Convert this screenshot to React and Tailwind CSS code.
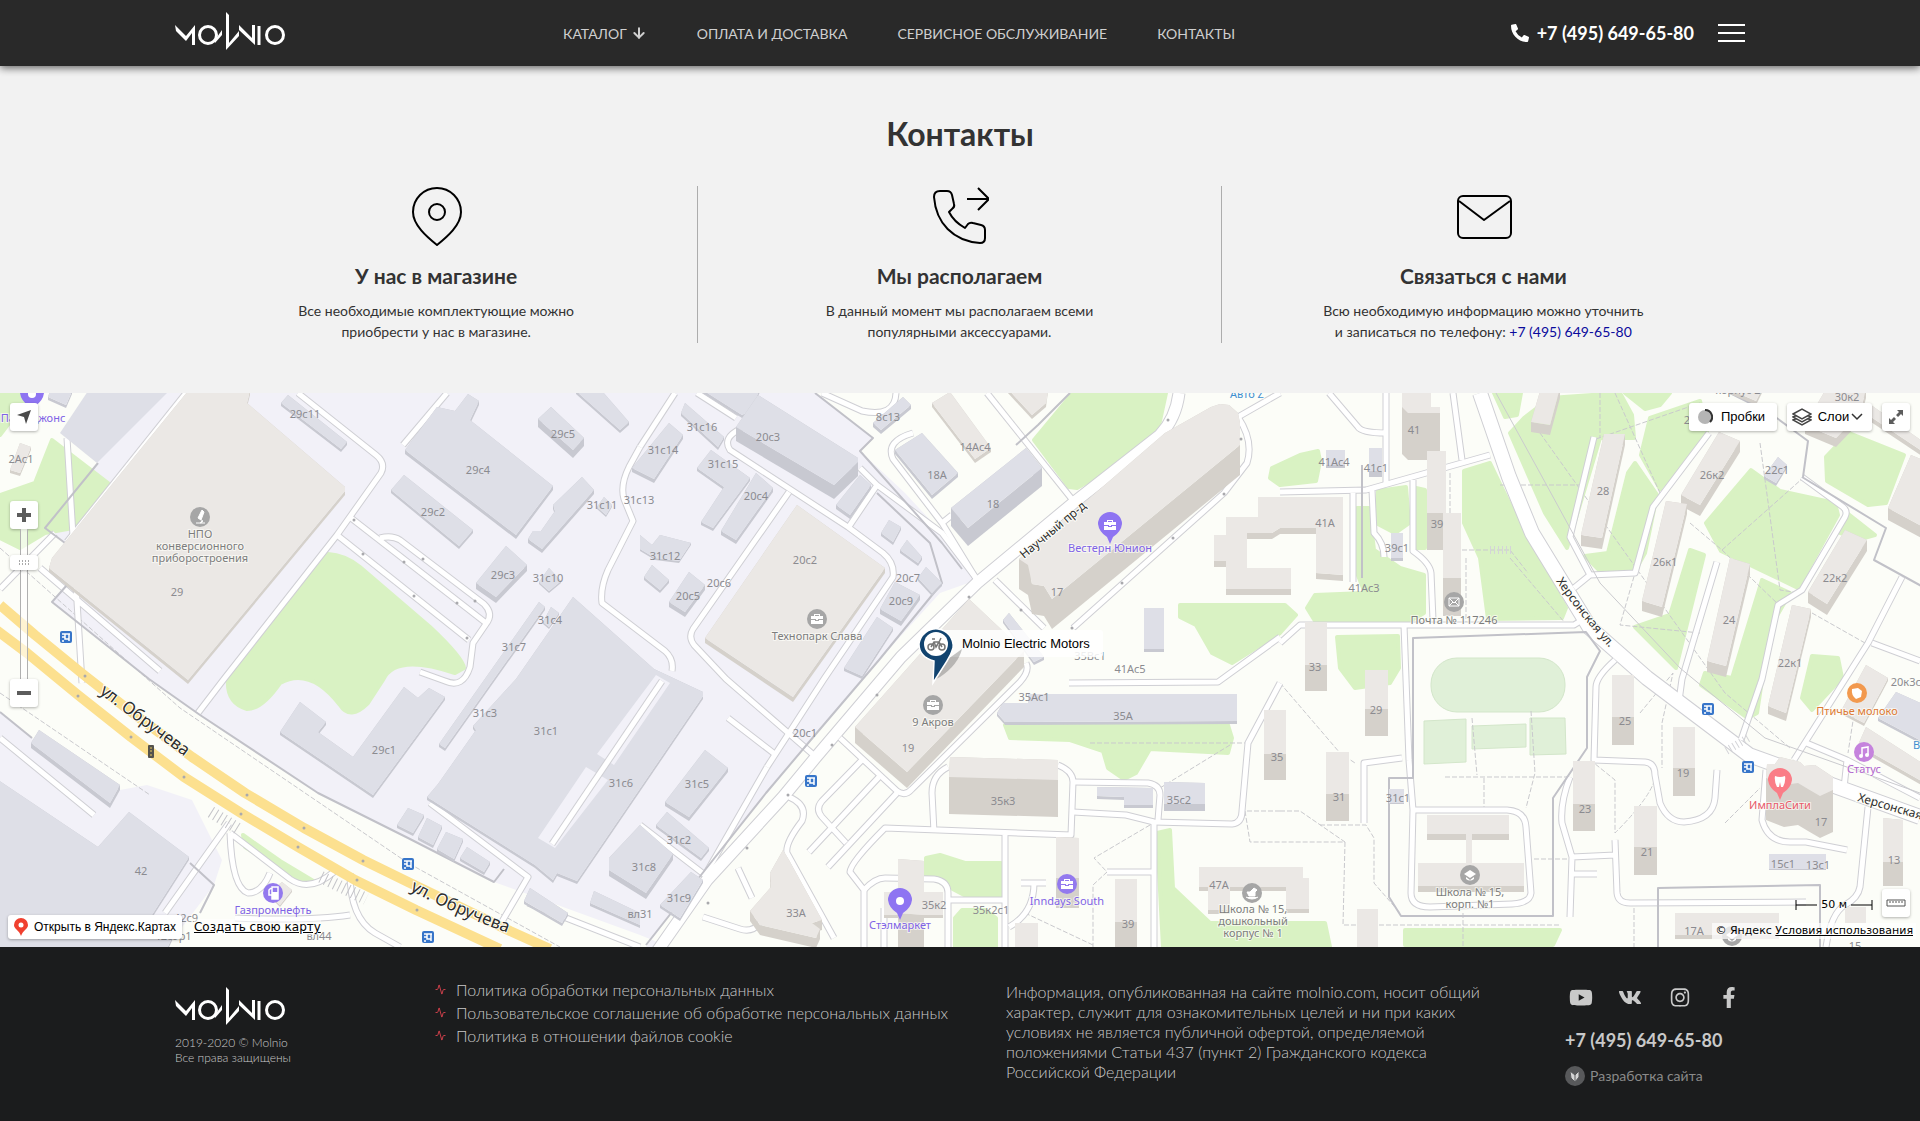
import React from 'react';
import { ArrowDown, Activity } from 'lucide-react';
import { FaPhoneAlt, FaYoutube, FaVk, FaInstagram, FaFacebookF } from 'react-icons/fa';

const PHONE = '+7 (495) 649-65-80';

const NAV = ['Оплата и доставка', 'Сервисное обслуживание', 'Контакты'];

const POLICIES = [
  'Политика обработки персональных данных',
  'Пользовательское соглашение об обработке персональных данных',
  'Политика в отношении файлов cookie',
];

const SOCIALS = [
  { name: 'YouTube', Icon: FaYoutube },
  { name: 'VK', Icon: FaVk },
  { name: 'Instagram', Icon: FaInstagram },
  { name: 'Facebook', Icon: FaFacebookF },
];

/* ---------- Map data ---------- */

const INDUSTRIAL = [
  'M90 0H815L873 45L860 58L905 100L944 142L974 188L940 200L879 267L815 342L766 400L705 477L646 554H670L640 542L494 489L408 445L318 400L200 322L149 286L52 209L67 192L49 174L65 150L45 135L98 70Z',
  'M0 319L32 345L120 397L147 392L192 407L222 467L214 492L167 554H0Z',
];

const GREENS = [
  '0,0 32,0 0,42',
  '52,47 108,90 73,135 45,140 20,155 0,145 0,102 35,90',
  '243,442 280,468 315,489 303,490 245,454',
  '1073,0 1166,0 1158,37 1120,70 1077,95 1069,94 1034,47',
  '1180,212 1285,212 1296,222 1280,240 1232,270 1212,260 1196,232 1180,224',
  '1272,75 1300,62 1318,58 1320,68 1316,88 1280,92 1270,85',
  '1378,98 1406,94 1409,130 1395,140 1376,130',
  '1416,95 1425,97 1425,155 1417,155',
  '1357,115 1369,115 1374,157 1400,175 1424,182 1424,220 1410,228 1315,228 1307,215 1315,202 1365,200 1357,180',
  '1464,78 1490,70 1526,145 1566,215 1562,225 1488,226 1480,165 1464,130',
  '1494,0 1521,0 1517,22 1505,24',
  '1510,40 1524,25 1550,5 1620,0 1632,22 1634,45 1600,45 1567,155 1545,120',
  '1635,70 1657,102 1645,160 1635,178 1600,178 1585,163 1608,160 1628,80',
  '1641,62 1650,25 1700,8 1707,38 1660,96',
  '1625,0 1670,0 1660,12 1645,16',
  '1751,77 1780,98 1835,110 1838,122 1798,195 1721,158 1706,130',
  '1849,40 1904,62 1886,110 1868,112 1827,88 1826,64',
  '1847,120 1875,142 1864,145 1840,140',
  '1762,187 1790,200 1770,235 1757,320 1748,325 1701,292 1705,280 1732,285',
  '1690,157 1704,162 1676,275 1635,234 1670,222',
  '1812,263 1838,265 1842,285 1812,317 1802,305',
  '1337,244 1398,243 1399,275 1390,290 1355,295 1340,275',
  '1005,332 1228,332 1232,345 1228,360 1150,356 1136,380 1124,386 1108,375 1103,358 1070,347 1010,345',
  '926,465 940,462 965,470 1001,470 1001,504 968,504 926,482',
  '955,525 962,517 985,517 996,525 996,554 955,554',
  '1157,440 1170,437 1173,495 1210,530 1325,530 1330,554 1163,554',
  '1405,537 1560,537 1553,552 1405,552',
];

const ROADS = [
  'M186 0L67 149',
  'M102 0L71 44M141 0L90 59',
  'M298 0L376 62Q386 70 381 80L337 142L224 286L198 320',
  'M447 0L403 52',
  'M351 125L486 230',
  'M337 142L469 247',
  'M380 145Q392 142 400 147L484 211Q494 221 486 231L473 250L470 274Q463 296 445 288L420 279',
  'M640 54L629 74Q620 92 624 106L633 128L608 177Q600 195 602 210L665 258Q674 266 672 278',
  'M675 0L640 54M697 0L736 25',
  'M740 36Q722 45 730 57L848 134L883 160Q895 170 893 184L824 286L767 374',
  'M789 99L693 236Q688 244 694 252L726 286L816 364',
  'M860 75L877 92L848 135M877 92L942 140L979 189',
  'M987 0L1075 110',
  'M913 40Q885 48 893 66L942 130L977 187M942 130L952 122',
  'M822 0L862 18Q895 25 896 0',
  'M1280 0L1238 24Q1254 48 1247 70L1224 100L1073 235M1044 235L995 187',
  'M1026 270Q1030 278 1020 289L912 396Q905 404 897 398L840 345',
  'M897 400L828 474M862 367L822 408Q815 416 822 424L846 450M879 384L809 459M728 325L776 362',
  'M789 404Q808 412 802 428Q785 450 787 460L834 545M738 475L752 505M703 524L740 536Q752 540 760 530',
  'M934 439L932 400Q932 382 948 374M1058 372Q1073 378 1073 389L1071 442L885 435Q850 470 850 479L864 497V554',
  'M864 497Q875 485 885 485L934 486Q948 488 948 500V554M884 515V554',
  'M1073 389L1148 390Q1160 392 1160 402L1158 427M1073 419L1126 422L1154 429L1232 431Q1242 430 1242 418L1248 350L1280 290',
  'M1154 429V554M1107 479H1154M1005 442V554M948 507H1005M1021 490H1046M1034 490Q1034 520 1009 534',
  'M1069 290L1218 289L1280 244',
  'M640 432L705 482L767 374',
  'M1329 0L1358 34Q1362 40 1386 40M1386 0V90',
  'M1280 99L1366 97L1490 62M1372 97L1374 140Q1384 150 1384 164',
  'M1413 87V158Q1430 170 1431 180L1433 227M1353 100V189',
  'M1280 250L1300 232H1402L1574 232L1590 222M1404 232L1409 367',
  'M1453 0L1462 67M1594 44L1570 144L1590 182L1635 180L1653 114L1709 40M1590 182L1574 195',
  'M1802 84L1843 114Q1848 118 1845 124L1802 197L1778 212L1762 286L1741 347',
  'M1717 169L1682 286L1679 308M1902 184L1868 250L1794 367M1872 250L1920 268',
  'M1615 267Q1596 284 1596 294L1594 367L1645 369Q1655 370 1655 382L1660 410Q1668 429 1684 429Q1713 427 1715 405L1717 377',
  'M1570 384Q1560 410 1562 430L1572 464L1570 524M1572 464L1615 462M1572 481H1597M1615 447L1617 500Q1618 510 1630 510L1806 509',
  'M1868 414L1860 494Q1858 505 1845 512Q1831 520 1826 554M1766 377L1762 427Q1768 449 1790 449L1806 449L1847 457',
  'M1364 430V370L1402 365M1409 367L1413 417L1507 417Q1525 418 1526 434L1531 500Q1530 510 1512 511L1430 514Q1411 514 1411 500L1413 417',
  'M1804 349L1847 367L1844 395M1847 367L1920 405',
  'M0 394L98 466M0 345L94 422M229 430L165 520M430 410L528 484L500 532M528 510L640 554',
  'M230 440Q232 495 248 500Q262 500 270 480M230 440L290 486Q310 500 335 478M350 480Q350 525 375 540L400 554M350 522Q310 528 235 525',
  'M67 45L82 290M0 196L55 140M40 175L160 278M600 370L548 450L636 315',
];

const NAUCHNY = 'M1179 0Q1176 25 1160 42L1077 107L977 190L901 264L816 364L783 404L707 487L656 560';
const KHERSONSKAYA = 'M1480 0L1509 84L1532 140L1590 235L1647 285L1749 362L1920 424';

const FOOTPATHS = [
  'M0 155L180 315L408 470L560 554M0 300L150 402M1600 0V45M1500 92H1584M1596 46L1700 10M1615 0L1660 100',
  'M1690 130L1722 157L1782 215M1722 157L1803 85M1760 50L1780 197L1800 200M1812 220L1865 250L1850 277',
  'M1462 157H1510L1528 180M1510 165L1565 230M1450 80V210M1466 165V230M1280 290L1340 360L1355 370',
  'M1280 418H1300L1345 449H1280M1320 432H1366L1374 445V490L1400 520M1345 449L1343 532H1560M1463 520V554',
  'M1472 325L1477 382M1531 318L1535 380L1526 415M1445 384H1570M1484 385V417M1534 466H1570M1634 555V510M1656 380Q1655 400 1615 440V387L1594 370',
  'M1090 350H1248M1230 352L1160 395M1150 432L1094 465L1107 479L1093 492V554M1025 520L1093 552M1280 418H1245L1250 449H1280',
  'M1640 320L1673 280L1662 330V375M1725 430L1760 395M1700 240L1620 232L1635 180M1540 40L1725 300L1790 355M1855 315L1848 360',
];

const FENCES = [
  'M98 70L45 135L65 150M67 192L52 209L149 286L200 322L318 400L408 445L494 489L504 476',
  'M815 0L873 45L860 58L942 150L962 176M646 552L705 477L766 400L815 342L879 267L942 190L930 150L877 100',
  'M1413 245V385H1389V504L1401 523H1553V405L1587 355V284L1600 258L1586 239Z',
  'M1658 554V495L1820 492V554M1362 72V185M1802 84L1886 135L1874 167L1925 195',
  'M1803 84L1808 48L1770 20L1730 0M1070 0L1045 25L1038 32L1016 52M190 470L214 492L200 520M0 319L32 345',
];

// [kind, roof outline, wall height]; i - industrial, r - residential
const BUILDINGS = [
  ['i', '90,-5 172,-5 97,70 60,40', 0],
  ['r', '20,50 31,54 20,80 10,77', 3],
  ['i', '50,-2 72,-2 66,12 48,4', 3],
  ['r', '188,-2 250,-2 247,10 345,94 345,98 188,287 49,175 52,165', 4],
  ['i', '288,2 347,49 341,56 281,10', 3],
  ['i', '437,14 455,18 468,1 479,8 470,27 553,93 516,142 405,57', 4],
  ['i', '551,14 584,45 573,57 538,26', 8],
  ['i', '576,-2 602,-2 629,29 620,37', 3],
  ['i', '404,82 473,137 459,153 391,97', 3],
  ['i', '582,84 594,97 542,156 528,146 533,138 541,138 555,118 553,112', 4],
  ['i', '506,153 527,172 496,204 476,190', 6],
  ['i', '549,175 561,188 549,198 539,189', 2],
  ['i', '604,104 612,112 606,122 597,114', 2],
  ['i', '539,209 545,214 445,355 439,351', 3],
  ['i', '551,214 559,220 549,234 543,229', 2],
  ['i', '573,204 654,276 703,299 703,303 577,488 557,480 553,487 535,472 427,404 438,391 476,337 473,333 516,286', 3],
  ['i', '300,309 326,329 318,339 353,364 404,294 418,305 429,295 445,304 373,402 280,339', 3],
  ['i', '408,415 424,422 413,440 397,432', 3],
  ['i', '427,425 442,433 433,452 418,444', 3],
  ['i', '446,439 463,446 454,466 437,456', 3],
  ['i', '467,454 490,469 484,479 460,465', 3],
  ['i', '530,495 568,520 562,530 524,508', 3],
  ['i', '594,498 640,520 640,532 590,510', 3],
  ['i', '39,337 120,392 110,410 31,350', 5],
  ['i', '-5,385 98,454 129,419 189,464 150,525 176,536 165,560 -5,560', 3],
  ['i', '640,432 673,461 646,500 609,477 609,465', 6],
  ['i', '667,419 709,455 701,465 656,432', 3],
  ['i', '705,357 728,375 689,424 665,409', 4],
  ['i', '691,479 703,487 680,525 660,512', 3],
  ['r', '783,457 789,467 822,527 812,530 820,536 816,545 760,532 750,518 771,494 770,480', 10],
  ['r', '282,489 292,497 280,512 268,500', 2],
  ['i', '685,10 724,44 718,54 681,20', 3],
  ['i', '669,30 683,42 654,86 632,75', 4],
  ['i', '711,57 750,85 713,135 701,129 724,94 697,75', 3],
  ['i', '701,-4 760,-4 750,18 742,22', 3],
  ['i', '758,2 858,65 858,69 834,92 736,34', 14],
  ['i', '860,82 871,92 850,122 836,112', 4],
  ['i', '756,80 773,95 736,147 721,138', 4],
  ['i', '640,142 652,152 660,142 691,150 679,168 655,165 640,156', 2],
  ['i', '652,172 669,187 660,197 644,184', 3],
  ['i', '689,179 705,192 685,219 669,209', 5],
  ['r', '797,112 885,175 793,304 705,245', 5],
  ['i', '889,127 901,134 893,149 881,140', 3],
  ['i', '907,147 922,164 918,170 900,157', 3],
  ['i', '926,174 942,190 932,200 918,185', 3],
  ['i', '895,189 920,202 901,228 880,216', 5],
  ['i', '877,224 893,235 862,283 844,275', 3],
  ['i', '903,4 911,12 881,37 873,30', 4],
  ['r', '950,-1 991,55 975,66 932,10', 4],
  ['r', '1007,-5 1048,-5 1046,10 1032,22', 4],
  ['i', '922,40 958,80 932,102 895,57', 4],
  ['i', '1026,55 1042,75 968,135 951,115', 18],
  ['i', '1009,220 1044,264 1034,269 1003,227', 3],
  ['r', '1211,14 1220,11 1229,12 1238,20 1240,30 1240,52 1052,206 1044,193 1032,191 1028,172 1019,166 1165,40', 30],
  ['r', '969,206 1024,258 907,379 855,334', 16],
  ['r', '1258,104 1343,104 1343,182 1316,180 1316,135 1280,135 1272,140 1247,140 1247,175 1291,175 1291,196 1226,196 1226,168 1214,168 1214,142 1226,142 1226,124 1258,124', 6],
  ['i', '1144,215 1164,215 1164,256 1144,256', 3],
  ['i', '1003,310 1028,310 1028,301 1237,301 1237,328 1005,329 997,320', 3],
  ['r', '950,364 1058,367 1058,387 949,384', 37],
  ['i', '1164,389 1205,390 1205,411 1164,411', 7],
  ['i', '1097,394 1153,395 1153,412 1124,412 1124,404 1097,403', 3],
  ['r', '884,499 943,499 943,522 884,522', 3],
  ['r', '898,466 924,468 924,522 898,520', 36],
  ['r', '1056,444 1079,445 1079,485 1056,485', 30],
  ['r', '1115,486 1137,486 1137,529 1115,529', 28],
  ['r', '1015,530 1038,530 1038,560 1015,560', 0],
  ['r', '1199,474 1303,474 1303,485 1309,485 1309,516 1286,516 1286,494 1230,494 1230,517 1208,517 1208,494 1199,494', 4],
  ['r', '1264,317 1286,317 1286,361 1264,361', 26],
  ['r', '1305,229 1327,229 1327,272 1305,272', 26],
  ['r', '1365,277 1388,277 1388,316 1365,316', 27],
  ['r', '1326,359 1349,359 1349,401 1326,401', 27],
  ['r', '1402,-5 1431,-5 1431,14 1440,14 1440,20 1408,20 1402,14', 47],
  ['r', '1427,58 1446,58 1446,120 1427,120', 37],
  ['r', '1443,120 1461,120 1461,185 1443,185', 38],
  ['i', '1326,57 1345,57 1345,72 1326,72', 3],
  ['i', '1369,55 1382,55 1382,78 1369,78', 6],
  ['i', '1391,140 1403,140 1403,165 1391,165', 3],
  ['r', '1604,41 1625,41 1602,145 1581,142', 11],
  ['r', '1541,-5 1560,-5 1550,32 1531,29', 10],
  ['r', '1719,39 1740,48 1700,112 1681,102', 11],
  ['r', '1666,108 1687,111 1662,214 1642,208', 10],
  ['r', '1730,165 1750,171 1726,273 1707,268', 11],
  ['r', '1845,137 1867,147 1827,211 1808,199', 11],
  ['r', '1792,212 1811,216 1786,320 1768,313', 8],
  ['i', '1778,64 1787,72 1776,90 1764,83', 3],
  ['r', '1826,-4 1866,-4 1860,20 1836,45 1805,32', 9],
  ['r', '1911,62 1925,68 1925,135 1888,115', 12],
  ['r', '1871,12 1925,50 1925,60 1868,22', 5],
  ['r', '1728,-4 1762,-4 1756,8', 4],
  ['r', '1866,272 1888,285 1864,330 1841,318', 3],
  ['i', '1896,299 1925,312 1925,350 1878,325', 3],
  ['r', '1866,334 1925,372 1925,390 1858,352', 4],
  ['r', '1612,282 1634,282 1634,324 1612,324', 28],
  ['r', '1573,368 1595,368 1595,411 1573,411', 27],
  ['r', '1673,334 1695,334 1695,375 1673,375', 28],
  ['r', '1634,413 1657,413 1657,454 1634,454', 28],
  ['r', '1767,371 1775,371 1780,364 1800,369 1804,373 1815,372 1833,384 1833,397 1820,403 1808,396 1798,390 1784,392 1766,385', 42],
  ['i', '1769,461 1826,461 1826,476 1769,476', 1],
  ['r', '1883,425 1903,427 1903,469 1883,469', 24],
  ['r', '1427,422 1509,422 1509,441 1472,441 1472,470 1524,470 1524,493 1418,493 1418,470 1466,470 1466,441 1427,441', 6],
  ['r', '1675,520 1779,520 1779,542 1675,542', 4],
  ['r', '1357,516 1378,516 1378,560 1357,560', 0],
  ['r', '1845,514 1866,514 1866,530 1845,530', 0],
  ['i', '1389,396 1404,396 1404,410 1389,410', 1],
];

const FILLS = {
  i: { roof: '#dedfe7', wall: '#c8c9d1' },
  r: { roof: '#ebe8e5', wall: '#d5d1cb' },
};

// [text, x, y] - house numbers
const NUMBERS = [
  ['29с11', 305, 25], ['29с5', 563, 45], ['29с4', 478, 81], ['29с2', 433, 123], ['31с11', 602, 116],
  ['31с13', 639, 111], ['29с3', 503, 186], ['31с10', 548, 189], ['31с4', 550, 231], ['31с7', 514, 258],
  ['29', 177, 203], ['2Ас1', 21, 70], ['31с16', 702, 38], ['31с14', 663, 61], ['31с15', 723, 75],
  ['20с3', 768, 48], ['20с4', 756, 107], ['8с13', 888, 28], ['14Ас4', 975, 58], ['18А', 937, 86],
  ['18', 993, 115], ['31с12', 665, 167], ['20с6', 719, 194], ['20с5', 688, 207], ['20с2', 805, 171],
  ['20с7', 908, 189], ['20с9', 901, 212], ['17', 1057, 203], ['41Ас5', 1130, 280], ['35Вс1', 1090, 267],
  ['41', 1414, 41], ['41Ас4', 1334, 73], ['41с1', 1376, 79], ['41А', 1325, 134], ['39', 1437, 135],
  ['39с1', 1397, 159], ['41Ас3', 1364, 199], ['33', 1315, 278], ['28', 1603, 102], ['26к2', 1712, 86],
  ['26к1', 1665, 173], ['22с1', 1777, 81], ['22к2', 1835, 189], ['24', 1729, 231], ['22к1', 1790, 274],
  ['30к2', 1847, 8], ['26к3', 1696, 31], ['корпус 2', 1738, 1], ['31с3', 485, 324], ['31с1', 546, 342], ['29с1', 384, 361],
  ['31с6', 621, 394], ['42', 141, 482], ['42с9', 186, 529], ['42с9р1', 173, 547], ['вл44', 319, 547],
  ['20с1', 805, 344], ['31с5', 697, 395], ['31с2', 679, 451], ['31с8', 644, 478], ['31с9', 679, 509],
  ['вл31', 640, 525], ['33А', 796, 524], ['35Ас1', 1034, 308], ['35А', 1123, 327], ['19', 908, 359],
  ['35к3', 1003, 412], ['35с2', 1179, 411], ['35', 1277, 368], ['35к2', 934, 516], ['35к2с1', 991, 521],
  ['39', 1128, 535], ['47А', 1219, 496], ['29', 1376, 321], ['31', 1339, 408], ['31с1', 1398, 409],
  ['25', 1625, 332], ['23', 1585, 420], ['19', 1683, 384], ['21', 1647, 463], ['17', 1821, 433],
  ['15с1', 1783, 475], ['13с1', 1818, 476], ['13', 1894, 471], ['17А', 1694, 542], ['20к3с3', 1909, 293], ['15', 1855, 557],
];

const PLACES = [
  { lines: ['НПО', 'конверсионного', 'приборостроения'], x: 200, y: 145, color: '#7d7d7d' },
  { lines: ['Технопарк Слава'], x: 817, y: 247, color: '#7d7d7d' },
  { lines: ['9 Акров'], x: 933, y: 333, color: '#7d7d7d' },
  { lines: ['Вестерн Юнион'], x: 1110, y: 159, color: '#7f63e6' },
  { lines: ['Почта № 117246'], x: 1454, y: 231, color: '#7d7d7d' },
  { lines: ['Школа № 15,', 'дошкольный', 'корпус № 1'], x: 1253, y: 520, color: '#7d7d7d' },
  { lines: ['Школа № 15,', 'корп. №1'], x: 1470, y: 503, color: '#7d7d7d' },
  { lines: ['Птичье молоко'], x: 1857, y: 322, color: '#dd7a34' },
  { lines: ['Статус'], x: 1864, y: 380, color: '#b266cf' },
  { lines: ['ИмплаСити'], x: 1780, y: 416, color: '#e8596a' },
  { lines: ['Inndays South'], x: 1067, y: 512, color: '#7f63e6' },
  { lines: ['Стэлмаркет'], x: 900, y: 536, color: '#7f63e6' },
  { lines: ['Газпромнефть'], x: 273, y: 521, color: '#7f63e6' },
  { lines: ['Папа Джонс'], x: 33, y: 29, color: '#7f63e6' },
  { lines: ['Авто Z'], x: 1247, y: 5, color: '#3f8fd0' },
  { lines: ['Верный'], x: 1934, y: 356, color: '#3f8fd0' },
];

const BUS_STOPS = [[66, 244], [408, 471], [428, 544], [811, 388], [1708, 316], [1748, 374]];

// Small arrows along the one-way streets
const ARROWS = [
  [354, 127], [363, 161], [404, 169], [423, 166], [414, 203], [457, 210], [475, 208], [467, 245],
  [969, 204], [1224, 101], [1173, 145], [1122, 190], [1072, 235], [1021, 217], [832, 352], [788, 402],
  [747, 455], [877, 302], [708, 510], [85, 283], [78, 303], [131, 344], [184, 384], [247, 402],
  [304, 435], [363, 468], [241, 421], [298, 454], [357, 487], [417, 517], [1168, 27], [1241, 46],
];

const GLYPHS = {
  case: <path d="M-6-3H-3V-5H3V-3H6V0H1V1H-1V0H-6ZM-6 1H-2V2H2V1H6V5H-6ZM-2-4V-3H2V-4Z" fill="#fff" fillRule="evenodd" />,
  mail: <path d="M-5-4H5V4H-5ZM-5-4L0 1L5-4M-5 4L-1 0M5 4L1 0" fill="none" stroke="#fff" />,
  lab: <path d="M2-7L-2 1L1 3L4-5ZM-4 6H5M2 3Q4 5 0 6" fill="#fff" stroke="#fff" />,
  fuel: (
    <>
      <path d="M-1-6H5V6H-1ZM-1 2H-4V-3L-2-5" fill="none" stroke="#fff" strokeWidth="1.5" />
      <path d="M-1-1H5V6H-1Z" fill="#fff" />
    </>
  ),
  cap: <path d="M-6-1L0-5L6-1L0 3ZM-4 2V4Q0 7 4 4V2L0 5Z" fill="#fff" />,
  horse: <path d="M-5-1L-2-1L2-5L5-3L3-1V3H-3ZM-6 4Q0 8 6 4" fill="#fff" stroke="#fff" />,
  food: <path d="M-5-4L1-5L5-2L4 4L-1 6Q-6 2-5-4Z" fill="#fff" />,
  music: (
    <>
      <path d="M-2 4V-4L4-5V3" fill="none" stroke="#fff" strokeWidth="1.5" />
      <circle cx="-3" cy="4" r="2" fill="#fff" />
      <circle cx="3" cy="3" r="2" fill="#fff" />
    </>
  ),
  tooth: <path d="M-5-5Q0-3 5-5Q6 0 3 6H1L0 1L-1 6H-3Q-6 0-5-5Z" fill="#fff" />,
  dot: <circle r="4" fill="#fff" />,
};

const POIS = [
  ['lab', 200, 124, '#a6a6a6'], ['case', 817, 226, '#a6a6a6'], ['case', 933, 312, '#a6a6a6'],
  ['mail', 1454, 209, '#a6a6a6'], ['horse', 1252, 500, '#a6a6a6'], ['cap', 1470, 482, '#a6a6a6'],
  ['food', 1857, 300, '#f2994e'], ['music', 1864, 359, '#c583dd'], ['case', 1067, 491, '#9379ee'], ['fuel', 273, 500, '#9379ee'],
  ['cap', 1732, 543, '#a6a6a6'],
];

const PINS = [
  ['case', 1110, 132, '#8e74f2'], ['dot', 900, 508, '#8e74f2'], ['dot', 32, 1, '#8e74f2'], ['tooth', 1780, 388, '#fa7d87'],
];

const Building = ({ kind, points, height }) => {
  const pts = points.split(' ').map((p) => p.split(',').map(Number));
  return (
    <g>
      {height > 0 &&
        pts.map(([x, y], i) => {
          const [nx, ny] = pts[(i + 1) % pts.length];
          return (
            <polygon
              key={i}
              points={`${x},${y} ${nx},${ny} ${nx},${ny + height} ${x},${y + height}`}
              fill={FILLS[kind].wall}
            />
          );
        })}
      <polygon points={points} fill={FILLS[kind].roof} />
    </g>
  );
};

const MapDrawing = () => (
  <svg
    viewBox="0 0 1920 554"
    preserveAspectRatio="xMidYMid slice"
    className="block w-full h-full font-['Noto_Sans',sans-serif]"
    role="img"
    aria-label="Карта проезда"
  >
    <rect width="1920" height="554" fill="#fcfdf8" />
    {INDUSTRIAL.map((d) => <path key={d} d={d} fill="#f2f1f8" />)}
    <g fill="#d9f2c3" stroke="#d9f2c3" strokeWidth="4" strokeLinejoin="round">
      {GREENS.map((p) => <polygon key={p} points={p} />)}
      <path d="M328 161Q345 162 360 174L430 234Q463 265 464 275L455 280Q395 260 383 287L368 310Q350 328 340 312Q310 273 280 290Q262 316 247 316Q226 310 228 285Z" />
    </g>
    <g fill="#e0f0d8" stroke="#d3e6ca">
      <rect x="1431" y="265" width="134" height="54" rx="26" />
      <path d="M1424 328L1466 326V369L1424 371ZM1472 333L1526 331V354L1472 356ZM1530 325H1565L1566 361L1530 362Z" />
    </g>
    <g fill="none" stroke="#c9c9cd" strokeDasharray="5 2">
      {FOOTPATHS.map((d) => <path key={d} d={d} />)}
    </g>

    {/* Streets */}
    <g fill="none" strokeLinejoin="round">
      <g stroke="#cfcfd4" strokeWidth="7">{ROADS.map((d) => <path key={d} d={d} />)}</g>
      <path d={NAUCHNY} stroke="#cfcfd4" strokeWidth="13" />
      <path d={KHERSONSKAYA} stroke="#cfcfd4" strokeWidth="16" />
      <g stroke="#fff" strokeWidth="5">{ROADS.map((d) => <path key={d} d={d} />)}</g>
      <path d={NAUCHNY} stroke="#fff" strokeWidth="11" />
      <path d={KHERSONSKAYA} stroke="#fff" strokeWidth="14" />
      <path d="M1496 0L1540 80L1600 190L1680 275L1765 345L1920 400" stroke="#cacace" />
      <path d="M0 212L35 242L84 282L130 318L192 364L245 400L304 435L363 467L408 489L510 538L550 556" stroke="#fce08f" strokeWidth="10" />
      <path d="M-5 236L27 260L78 302L131 344L184 384L241 420L298 454L355 487L416 517L500 556" stroke="#fce08f" strokeWidth="10" />
      <path d="M211 419L240 437M321 484L366 506" stroke="#c4c4c8" strokeWidth="12" strokeDasharray="1 4" />
      <path d="M1748 345L1726 358M1490 157H1512" stroke="#d4d4d8" strokeWidth="8" strokeDasharray="1 3" />
      <g stroke="#c1c1c8" strokeWidth="2">{FENCES.map((d) => <path key={d} d={d} />)}</g>
    </g>

    {BUILDINGS.map(([kind, points, height]) => (
      <Building key={points} kind={kind} points={points} height={height} />
    ))}
    {/* Courtyards and the driveway inside 31с1 */}
    <path d="M586 374L608 387L555 455L538 445ZM656 282L670 290L614 372L597 361Z" fill="#f2f1f8" />
    <g fill="none">
      <path d="M662 288L552 451" stroke="#cfcfd4" strokeWidth="7" />
      <path d="M662 288L552 451" stroke="#fff" strokeWidth="5" />
    </g>

    <g fill="#a9a9ad">
      {ARROWS.map(([x, y]) => <circle key={`${x}-${y}`} cx={x} cy={y} r="1.5" />)}
    </g>

    {/* House numbers */}
    <g fontSize="11" fill="#8b8b90" textAnchor="middle">
      {NUMBERS.map(([text, x, y]) => <text key={`${text}-${x}`} x={x} y={y}>{text}</text>)}
    </g>

    {/* Street names */}
    <defs>
      <path id="obrucheva-1" d="M99 300Q143 333 200 375" />
      <path id="obrucheva-2" d="M410 497Q452 521 525 546" />
      <path id="nauchny" d="M1024 166L1098 105" />
      <path id="khersonskaya" d="M1556 188Q1581 225 1618 264" />
      <path id="khersonskaya-2" d="M1857 408L1960 438" />
    </defs>
    <g fill="#2e2e2e" stroke="#fdfdf8" strokeWidth="2" paintOrder="stroke">
      <text fontSize="17"><textPath href="#obrucheva-1">ул. Обручева</textPath></text>
      <text fontSize="17"><textPath href="#obrucheva-2">ул. Обручева</textPath></text>
      <text fontSize="12"><textPath href="#nauchny">Научный пр-д</textPath></text>
      <text fontSize="12"><textPath href="#khersonskaya">Херсонская ул.</textPath></text>
      <text fontSize="12"><textPath href="#khersonskaya-2">Херсонская ул.</textPath></text>
    </g>

    {BUS_STOPS.map(([x, y]) => (
      <g key={x} transform={`translate(${x} ${y})`}>
        <rect x="-6" y="-6" width="12" height="12" rx="2" fill="#3775c9" />
        <path d="M-4-3H4M3-3V4M-1-3V2H3M-4 0H-1M-4 4H-2" fill="none" stroke="#fff" strokeWidth="1.5" />
      </g>
    ))}

    {/* Traffic light */}
    <rect x="148" y="352" width="6" height="13" rx="1" fill="#55534c" />
    <g fill="#b8a25a"><circle cx="151" cy="355" r="1" /><circle cx="151" cy="358" r="1" /><circle cx="151" cy="362" r="1" /></g>

    {POIS.map(([glyph, x, y, color]) => (
      <g key={`${x}-${y}`} transform={`translate(${x} ${y})`}>
        <circle r="10" fill={color} />
        {GLYPHS[glyph]}
      </g>
    ))}
    {PINS.map(([glyph, x, y, color]) => (
      <g key={`${x}-${y}`} transform={`translate(${x} ${y})`}>
        <path d="M-12-1A12 12 0 1 1 12-1Q11 7 3 12L0 19L-3 12Q-11 7-12-1Z" fill={color} />
        {GLYPHS[glyph]}
      </g>
    ))}

    <g fontSize="11" textAnchor="middle" stroke="#fdfdf8" strokeWidth="2" strokeOpacity="0.7" paintOrder="stroke">
      {PLACES.map(({ lines, x, y, color }) => (
        <text key={lines[0] + x} fill={color}>
          {lines.map((line, i) => <tspan key={line} x={x} y={y + i * 12}>{line}</tspan>)}
        </text>
      ))}
    </g>

    {/* Shop marker */}
    <rect x="937" y="237" width="166" height="27" rx="3" fill="#fff" fillOpacity="0.85" />
    <path d="M934 287L948 266L962 256Q958 272 940 284Z" fill="#555" fillOpacity="0.35" />
    <path d="M919 251A17 17 0 1 1 953 255Q951 262 947 268L933 290L934 268Q919 264 919 251Z" fill="#11436f" stroke="#fff" strokeWidth="1.5" />
    <circle cx="936" cy="251" r="12" fill="#fff" />
    <g fill="none" stroke="#777" strokeWidth="1.5">
      <circle cx="931" cy="254" r="3" />
      <circle cx="942" cy="254" r="3" />
      <path d="M931 254L934 249H939L942 254M934 249L936 254L939 249M932 246H935M939 249L941 245" />
    </g>
    <text x="962" y="255" fontSize="13" className="font-['Liberation_Sans',Arial,sans-serif]">Molnio Electric Motors</text>
  </svg>
);

/* ---------- Shared ---------- */

const Logo = () => (
  <svg viewBox="0 0 110 38" className="w-[110px] h-[38px]" fill="none" stroke="#fff" strokeWidth="3" role="img" aria-label="Molnio">
    <path d="M0 13L11 24L20 13V33H17V21L11 29L1 19Z" fill="#fff" stroke="none" />
    <circle cx="33" cy="23" r="8.5" />
    <path d="M40 28L47 18V23L40 31Z" fill="#fff" stroke="none" />
    <path d="M51 0L54 3V31L64 19V24L51 38Z" fill="#fff" stroke="none" />
    <path d="M64 13L77 26V13H80V33L64 18Z" fill="#fff" stroke="none" />
    <path d="M84 14V33" />
    <circle cx="100" cy="23" r="8.5" />
  </svg>
);

const PinIcon = () => (
  <svg viewBox="0 0 60 60" className="w-[60px] h-[60px]" fill="none" stroke="#000" strokeWidth="2" strokeLinejoin="round">
    <path d="M31 59C21 51 7 39 7 26A24 24 0 0 1 55 26C55 39 41 51 31 59Z" />
    <circle cx="31" cy="26" r="8" />
  </svg>
);

const CallIcon = () => (
  <svg viewBox="0 0 60 60" className="w-[60px] h-[60px]" fill="none" stroke="#000" strokeWidth="2" strokeLinejoin="round">
    <path d="M11 5H18Q22 5 23 9L25 18Q26 21 23 23L20 26C24 34 29 38 36 42L39 38Q41 36 44 37L52 39Q56 40 56 44V52Q56 57 51 57C24 55 7 37 5 11Q5 5 11 5Z" />
    <path d="M38 13H59M49 2L60 13L49 24" />
  </svg>
);

const MailIcon = () => (
  <svg viewBox="0 0 60 60" className="w-[60px] h-[60px]" fill="none" stroke="#000" strokeWidth="2" strokeLinejoin="round">
    <rect x="5" y="10" width="53" height="42" rx="5" />
    <path d="M6 15L31 34L57 15" />
  </svg>
);

const FEATURES = [
  { Icon: PinIcon, title: 'У нас в магазине', lines: ['Все необходимые комплектующие можно', 'приобрести у нас в магазине.'] },
  { Icon: CallIcon, title: 'Мы располагаем', lines: ['В данный момент мы располагаем всеми', 'популярными аксессуарами.'] },
  { Icon: MailIcon, title: 'Связаться с нами', lines: ['Всю необходимую информацию можно уточнить', 'и записаться по телефону: '], phone: true },
];

const Header = () => (
  <header className="relative z-10 bg-[#292929] shadow-[0_2px_8px_rgba(0,0,0,0.6)]">
    <div className="max-w-[1570px] h-[66px] mx-auto flex items-center justify-between">
      <a href="#home" className="w-[388px] pb-1"><Logo /></a>
      <nav className="flex-1 flex items-center gap-[50px] text-[14px] uppercase text-[#cfcfcf]">
        <a href="#catalog" className="flex items-center gap-1">
          Каталог
          <ArrowDown className="w-4 h-4" strokeWidth={3} />
        </a>
        {NAV.map((item) => <a key={item} href="#nav">{item}</a>)}
      </nav>
      <div className="flex items-center gap-6 text-white">
        <a href="tel:+74956496580" className="flex items-center gap-2 text-[18px] font-bold">
          <FaPhoneAlt className="w-[18px] h-[18px]" />
          {PHONE}
        </a>
        <button type="button" aria-label="Меню" className="w-[27px] flex flex-col gap-[6px]">
          <span className="h-[2px] w-full bg-white" />
          <span className="h-[2px] w-full bg-white" />
          <span className="h-[2px] w-full bg-white" />
        </button>
      </div>
    </div>
  </header>
);

const Contacts = () => (
  <section className="bg-[#f2f2f2] pt-12 pb-[50px] text-[#333]">
    <h1 className="text-[32px] leading-10 font-bold text-center">Контакты</h1>
    <div className="max-w-[1570px] mx-auto mt-8 grid grid-cols-3 divide-x divide-[#adadad]">
      {FEATURES.map(({ Icon, title, lines, phone }) => (
        <div key={title} className="h-[157px] flex flex-col items-center text-center">
          <Icon />
          <h2 className="mt-4 text-[21px] leading-7 font-bold">{title}</h2>
          <p className="mt-[10px] text-[14px] leading-[21px]">
            {lines[0]}
            <br />
            {lines[1]}
            {phone && <a href="tel:+74956496580" className="text-[#0a0a9c]">{PHONE}</a>}
          </p>
        </div>
      ))}
    </div>
  </section>
);

const MAP_BUTTON = 'h-7 bg-white rounded-[3px] shadow-[0_1px_3px_rgba(0,0,0,0.3)] flex items-center justify-center';

const YandexMap = () => (
  <section className="relative h-[554px] overflow-hidden font-['Liberation_Sans',Arial,sans-serif] text-black">
    <MapDrawing />

    {/* Left controls */}
    <button type="button" aria-label="Моё местоположение" className={`${MAP_BUTTON} absolute left-[10px] top-[10px] w-7`}>
      <svg viewBox="0 0 16 16" className="w-4 h-4"><path d="M15 1L10 15L8 8L1 6Z" fill="#4a4a4a" /></svg>
    </button>
    <div className="absolute left-[10px] top-[108px] w-7 flex flex-col items-center">
      <button type="button" aria-label="Приблизить" className={`${MAP_BUTTON} w-7`}>
        <svg viewBox="0 0 14 14" className="w-[14px] h-[14px]"><path d="M5 0H9V5H14V9H9V14H5V9H0V5H5Z" fill="#5c5c5c" /></svg>
      </button>
      <div className="h-[150px] w-2 border-x border-[#b0b0b0] bg-white/60" />
      <button type="button" aria-label="Отдалить" className={`${MAP_BUTTON} w-7`}>
        <span className="w-[14px] h-1 bg-[#5c5c5c]" />
      </button>
      <button type="button" aria-label="Масштаб" className="absolute top-[54px] w-7 h-[15px] bg-white rounded-[3px] shadow-[0_1px_3px_rgba(0,0,0,0.3)] flex items-center justify-center">
        <svg viewBox="0 0 11 5" className="w-[11px] h-[5px]"><path d="M0 1H11M0 4H11" stroke="#555" strokeDasharray="1 2" /></svg>
      </button>
    </div>

    {/* Right controls */}
    <div className="absolute right-[10px] top-[10px] flex gap-[10px] text-[13px]">
      <button type="button" className={`${MAP_BUTTON} w-[88px] gap-2 pr-1`}>
        <svg viewBox="0 0 16 16" className="w-4 h-4">
          <circle cx="8" cy="8" r="7" fill="#b5b5b5" />
          <path d="M8 1A7 7 0 0 1 13 13" fill="none" stroke="#333" strokeWidth="2" />
        </svg>
        Пробки
      </button>
      <button type="button" className={`${MAP_BUTTON} w-[85px] gap-[6px] pr-1`}>
        <svg viewBox="0 0 20 18" className="w-5 h-[18px]" fill="#fff" stroke="#444" strokeWidth="1.5">
          <path d="M1 12L10 8L19 12L10 17Z" />
          <path d="M1 9L10 5L19 9L10 14Z" />
          <path d="M1 6L10 1L19 6L10 11Z" />
        </svg>
        Слои
        <svg viewBox="0 0 12 8" className="w-3 h-2 -ml-1" fill="none" stroke="#333" strokeWidth="1.5"><path d="M1 1L6 6L11 1" /></svg>
      </button>
      <button type="button" aria-label="Развернуть карту" className={`${MAP_BUTTON} w-7`}>
        <svg viewBox="0 0 14 14" className="w-[14px] h-[14px]" fill="#5c5c5c">
          <path d="M8 0H14V6L12 4L9 7L7 5L10 2ZM0 8L2 10L5 7L7 9L4 12L6 14H0Z" />
        </svg>
      </button>
    </div>
    <div className="absolute right-[10px] bottom-[30px] flex items-center gap-[9px]">
      <div className="flex items-center gap-1 mt-1 text-[11px] leading-4 font-['DejaVu_Sans',Verdana,sans-serif]">
        <svg viewBox="0 0 22 10" className="w-[22px] h-[10px]" stroke="#000"><path d="M1 0V10M1 5H22" /></svg>
        50 м
        <svg viewBox="0 0 22 10" className="w-[22px] h-[10px]" stroke="#000"><path d="M21 0V10M0 5H21" /></svg>
      </div>
      <button type="button" aria-label="Линейка" className={`${MAP_BUTTON} w-7`}>
        <svg viewBox="0 0 20 8" className="w-5 h-2" fill="none" stroke="#555">
          <path d="M1 1H19V7H1ZM4 2V4M7 2V4M10 2V4M13 2V4M16 2V4" />
        </svg>
      </button>
    </div>

    {/* Bottom line */}
    <div className="absolute left-2 bottom-2 flex items-center gap-3">
      <a href="#open-map" className="h-6 px-[6px] bg-white rounded-[3px] shadow-[0_1px_3px_rgba(0,0,0,0.3)] flex items-center gap-[6px] text-[12px]">
        <svg viewBox="0 0 14 18" className="w-[14px] h-[18px]">
          <path d="M0 7A7 7 0 1 1 14 7C14 11 9 12 7 18C5 12 0 11 0 7Z" fill="#f0402f" />
          <circle cx="7" cy="7" r="2.5" fill="#fff" />
        </svg>
        Открыть в Яндекс.Картах
      </a>
      <a href="#create-map" className="text-[12px] leading-4 underline bg-white/50 font-['DejaVu_Sans',Verdana,sans-serif]">Создать свою карту</a>
    </div>
    <p className="absolute right-1 bottom-2 px-[3px] text-[11px] leading-4 bg-white/70 font-['DejaVu_Sans',Verdana,sans-serif]">
      © Яндекс <a href="#terms" className="underline">Условия использования</a>
    </p>
  </section>
);

const Footer = () => (
  <footer className="bg-[#1b1c1d] text-[#c9c9c9]">
    <div className="max-w-[1570px] mx-auto pt-[35px] pb-[38px] flex items-start">
      <div className="w-[260px] pt-[5px]">
        <a href="#home"><Logo /></a>
        <p className="mt-[10px] text-[12px] leading-[15px] font-light">
          2019-2020 © Molnio
          <br />
          Все права защищены
        </p>
      </div>
      <ul className="w-[571px] -mt-1 text-[16px] leading-[23px] font-light">
        {POLICIES.map((item) => (
          <li key={item} className="flex items-center gap-[10px]">
            <Activity className="w-[11px] h-[11px] text-[#d8434e]" />
            <a href="#policy">{item}</a>
          </li>
        ))}
      </ul>
      <p className="w-[500px] text-[16px] leading-5 font-light">
        Информация, опубликованная на сайте molnio.com, носит общий характер, служит для
        ознакомительных целей и ни при каких условиях не является публичной офертой, определяемой
        положениями Статьи 437 (пункт 2) Гражданского кодекса Российской Федерации
      </p>
      <div className="ml-auto w-[180px] pt-[5px]">
        <div className="flex justify-between px-1">
          {SOCIALS.map(({ name, Icon }) => (
            <a key={name} href="#social" aria-label={name}><Icon className="w-6 h-[21px]" /></a>
          ))}
        </div>
        <a href="tel:+74956496580" className="block mt-[18px] text-[18px] leading-7 font-bold">{PHONE}</a>
        <a href="#studio" className="mt-3 flex items-center gap-[5px] text-[14px] leading-5 text-[#8a8a8a]">
          <svg viewBox="0 0 20 20" className="w-5 h-5">
            <circle cx="10" cy="10" r="10" fill="#58595b" />
            <path d="M5 5L10 9L14 5V11L10 16L6 12ZM10 9V15" fill="#d5d5d5" stroke="#58595b" />
          </svg>
          Разработка сайта
        </a>
      </div>
    </div>
  </footer>
);

const App = () => (
  <div className="min-h-screen flex flex-col bg-[#1b1c1d] font-['Lato',sans-serif]">
    <Header />
    <main>
      <Contacts />
      <YandexMap />
    </main>
    <Footer />
  </div>
);

export default App;
